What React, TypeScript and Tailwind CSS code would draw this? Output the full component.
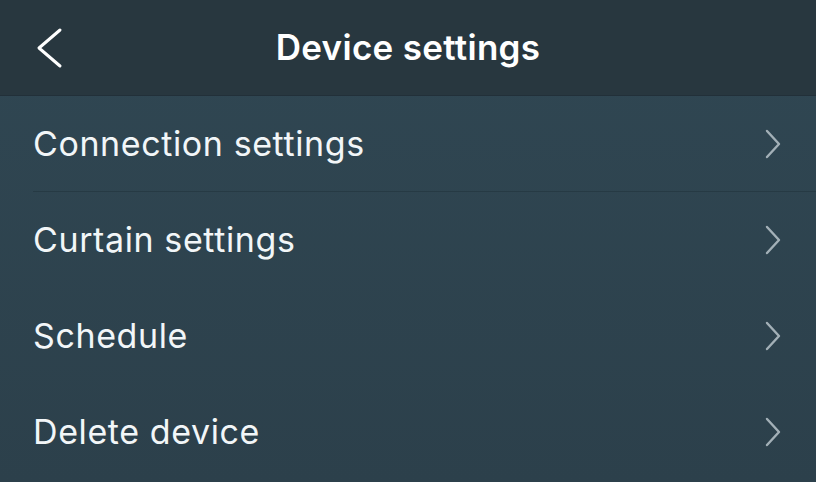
const items = ['Connection settings', 'Curtain settings', 'Schedule', 'Delete device'];

export default function App() {
  return (
    <div className="h-[482px] w-[816px] overflow-hidden bg-gradient-to-b from-[#304753] to-[#2c404b] font-['Inter',sans-serif] text-white">
      <header className="relative flex h-[96px] items-center justify-center border-b border-[#223039] bg-[#28373f]">
        <svg
          className="absolute left-[36px] top-[27px]"
          width="28"
          height="42"
          viewBox="0 0 28 42"
          fill="none"
          stroke="#ffffff"
          strokeWidth="3"
          strokeLinecap="round"
          strokeLinejoin="round"
        >
          <path d="M24 3 L3 21 L24 39" />
        </svg>
        <h1 className="text-[35px] font-semibold tracking-[0.3px]">Device settings</h1>
      </header>
      <ul>
        {items.map((label, i) => (
          <li key={label} className="flex h-[96px] items-center pl-[33px]">
            <div
              className={
                'flex h-full flex-1 items-center justify-between pr-[34px] ' +
                (i === 0 ? 'border-b border-[#263a44]' : '')
              }
            >
              <span className="text-[34px] leading-none tracking-[0.6px] text-[#f2f6f8]">{label}</span>
              <svg
                width="18"
                height="30"
                viewBox="0 0 18 30"
                fill="none"
                stroke="#a3b0b7"
                strokeWidth="2.4"
                strokeLinecap="round"
                strokeLinejoin="round"
              >
                <path d="M3 2 L15 15 L3 28" />
              </svg>
            </div>
          </li>
        ))}
      </ul>
    </div>
  );
}
